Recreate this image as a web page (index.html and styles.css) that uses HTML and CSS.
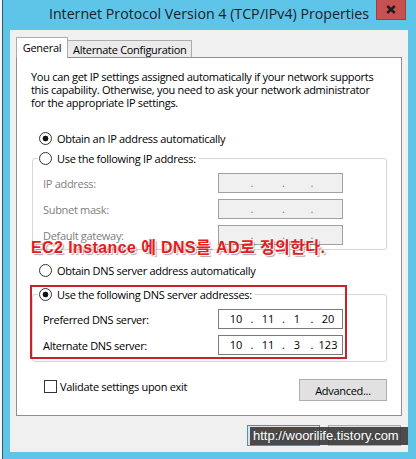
FILE: index.html
```html
<!DOCTYPE html>
<html>
<head>
	<title>Internet Protocol Version 4 (TCP/IPv4) Properties</title>
	<link rel="stylesheet" href="styles.css">
</head>
<body>
	<div class="window">
		<div class="titlebar">
			<span class="title">Internet Protocol Version 4 (TCP/IPv4) Properties</span>
			<span class="close"><svg width="10" height="9" viewBox="0 0 10 9"><path d="M1.2 1 L8.8 8 M8.8 1 L1.2 8" stroke="#1e1e1e" stroke-width="2.4"/></svg></span>
		</div>

		<div class="client">
			<div class="tabs">
				<span class="tab selected">General</span>
				<span class="tab">Alternate Configuration</span>
			</div>

			<div class="panel">
				<p class="intro">You can get IP settings assigned automatically if your network supports<br>this capability. Otherwise, you need to ask your network administrator<br>for the appropriate IP settings.</p>

				<div class="radio checked ip_auto">Obtain an IP address automatically</div>

				<fieldset class="group ip_group">
					<legend><span class="radio">Use the following IP address:</span></legend>
					<div class="field disabled">
						<span class="field_label">IP address:</span>
						<span class="ip"><b></b><i>.</i><b></b><i>.</i><b></b><i>.</i><b></b></span>
					</div>
					<div class="field disabled">
						<span class="field_label">Subnet mask:</span>
						<span class="ip"><b></b><i>.</i><b></b><i>.</i><b></b><i>.</i><b></b></span>
					</div>
					<div class="field disabled">
						<span class="field_label">Default gateway:</span>
						<span class="ip"><b></b><i>.</i><b></b><i>.</i><b></b><i>.</i><b></b></span>
					</div>
				</fieldset>

				<div class="radio dns_auto">Obtain DNS server address automatically</div>

				<fieldset class="group dns_group">
					<legend><span class="radio checked">Use the following DNS server addresses:</span></legend>
					<div class="field">
						<span class="field_label">Preferred DNS server:</span>
						<span class="ip"><b>10</b><i>.</i><b>11</b><i>.</i><b>1</b><i>.</i><b>20</b></span>
					</div>
					<div class="field">
						<span class="field_label">Alternate DNS server:</span>
						<span class="ip"><b>10</b><i>.</i><b>11</b><i>.</i><b>3</b><i>.</i><b>123</b></span>
					</div>
				</fieldset>

				<div class="options">
					<span class="checkbox">Validate settings upon exit</span>
					<span class="button advanced">Advanced...</span>
				</div>

				<!-- annotations drawn on the screenshot -->
				<div class="note">EC2 Instance 에 DNS를 AD로 정의한다.</div>
				<div class="highlight"></div>
			</div>

			<div class="buttons">
				<span class="button default">OK</span>
				<span class="button">Cancel</span>
			</div>

			<div class="watermark">http://woorilife.tistory.com</div>
		</div>
	</div>
</body>
</html>
```

FILE: styles.css
```css
/* Dialog window */

body { margin: 0; background: #f4f8fa; font-family: "Open Sans", sans-serif; font-size: 11px; letter-spacing: -0.3px; color: #000; }
.window { margin-left: 2px; border-left: 1px solid #2c5c6e; background: #5ec4e8; height: 459px; padding: 0 8px 7px 7px; box-sizing: border-box; display: flex; flex-direction: column; }

.titlebar { height: 30px; display: grid; grid-template-columns: 1fr auto 1fr; align-items: start; }
.title { grid-column: 2; margin-top: 5px; font-size: 14.2px; line-height: 18px; letter-spacing: 0; color: #1b2228; white-space: nowrap; }
.close { grid-column: 3; justify-self: end; margin-right: 2px; width: 30px; height: 20px; box-sizing: border-box; background: #c75050; border: 1px solid #a33c3c; border-top: 0; display: flex; align-items: center; justify-content: center; }

.client { flex: 1; position: relative; background: #f0f0f0; padding: 7px 6px 0 6px; }

/* Tabs */

.tabs { display: flex; align-items: flex-end; height: 21px; margin-bottom: -1px; }
.tab { height: 18px; line-height: 17px; box-sizing: border-box; padding: 0 5px; margin-left: -1px; border: 1px solid #acacac; border-bottom: 0; background: #ebebeb; white-space: nowrap; }
.tab.selected { position: relative; z-index: 1; height: 21px; line-height: 20px; width: 52px; margin-left: 0; padding: 0; text-align: center; background: #fff; }

.panel { position: relative; height: 359px; box-sizing: border-box; padding: 12px 14px 0 14px; background: #fff; border: 1px solid #8e8f8f; }
.intro { margin: 0; line-height: 13px; white-space: nowrap; }

/* Radios and check box */

.radio, .checkbox { display: flex; align-items: center; height: 15px; line-height: 15px; white-space: nowrap; }
.radio::before { content: ""; width: 11px; height: 11px; margin-right: 5px; border: 1px solid #333; border-radius: 50%; background: #fff; flex: none; }
.radio.checked::before { background: radial-gradient(circle, #111 0, #111 2.6px, #fff 3.2px); }
.checkbox::before { content: ""; width: 11px; height: 11px; margin-right: 3px; border: 1px solid #333; background: #fff; flex: none; }

.ip_auto { margin: 22px 0 0 8px; }
.dns_auto { margin: 13px 0 0 8px; }

/* Group boxes */

.group { margin: 5px 0 0 1px; padding: 7px 43px 4px 10px; border: 1px solid #d5d5d5; border-radius: 3px; }
.group legend { margin-left: -5px; padding: 0 3px 0 1px; height: 15px; }
.dns_group { margin-top: 9px; padding-bottom: 6px; }
.field { display: flex; justify-content: space-between; align-items: center; height: 20px; }
.field + .field { margin-top: 6px; }
.field.disabled .field_label { color: #808080; }

.ip { width: 125px; height: 20px; box-sizing: border-box; padding-left: 3px; border: 1px solid #7a7a7a; background: #fff; display: grid; grid-template-columns: 28px 4px 28px 2px 26px 4px 1fr; line-height: 18px; letter-spacing: 0; text-align: center; }
.ip b { font-weight: normal; }
.ip i { font-style: normal; }
.field.disabled .ip { border-color: #a0a0a0; background: #f0f0f0; color: #808080; }

.options { display: flex; justify-content: space-between; align-items: flex-start; margin-top: 17px; }
.options .checkbox { margin: 1px 0 0 13px; height: 13px; }

/* Buttons */

.button { display: inline-flex; align-items: center; justify-content: center; box-sizing: border-box; border: 1px solid #adadad; background: #e1e1e1; white-space: nowrap; }
.advanced { width: 88px; height: 22px; }
.buttons { display: flex; justify-content: flex-end; gap: 8px; margin-top: 9px; padding-right: 1px; }
.buttons .button { width: 73px; height: 21px; }
.buttons .default { border-color: #4d8fc4; }

/* Annotations */

.note { position: absolute; left: 14px; top: 182px; font-family: "Liberation Sans", "Noto Sans CJK KR", sans-serif; font-weight: bold; font-size: 16px; line-height: 16px; letter-spacing: 0.4px; color: #e41b23; white-space: nowrap; text-shadow: 1px 1px 0 #fff, 2px 2px 1px rgba(0, 0, 0, 0.35); }
.highlight { position: absolute; left: 13px; top: 227px; width: 317px; height: 74px; box-sizing: border-box; border: 2px solid #c8232c; }
.watermark { position: absolute; left: 240px; top: 397px; width: 158px; height: 18px; box-sizing: border-box; padding-left: 3px; background: rgba(52, 52, 52, 0.88); color: #fff; font-family: "Liberation Sans", sans-serif; font-size: 13px; line-height: 18px; letter-spacing: 0; white-space: nowrap; }
```
